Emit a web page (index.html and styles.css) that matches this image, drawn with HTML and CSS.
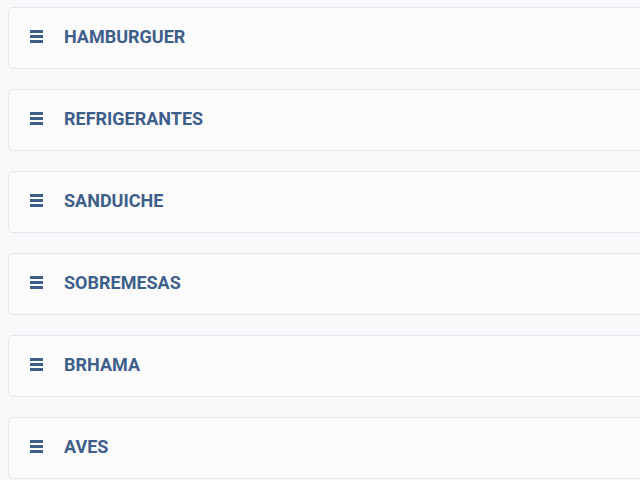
FILE: index.html
```html
<!DOCTYPE html>
<html lang="pt-BR">
<head>
  <meta charset="UTF-8" />
  <title>Categorias</title>
  <link rel="stylesheet" href="styles.css">
</head>
<body>

<!-- Lista de categorias -->
<div class="category-list">
  <div class="category-card">
    <span class="drag-icon"><i></i><i></i><i></i></span>
    <span class="category-name">HAMBURGUER</span>
  </div>
  <div class="category-card">
    <span class="drag-icon"><i></i><i></i><i></i></span>
    <span class="category-name">REFRIGERANTES</span>
  </div>
  <div class="category-card">
    <span class="drag-icon"><i></i><i></i><i></i></span>
    <span class="category-name">SANDUICHE</span>
  </div>
  <div class="category-card">
    <span class="drag-icon"><i></i><i></i><i></i></span>
    <span class="category-name">SOBREMESAS</span>
  </div>
  <div class="category-card">
    <span class="drag-icon"><i></i><i></i><i></i></span>
    <span class="category-name">BRHAMA</span>
  </div>
  <div class="category-card">
    <span class="drag-icon"><i></i><i></i><i></i></span>
    <span class="category-name">AVES</span>
  </div>
</div>

</body>
</html>
```

FILE: styles.css
```css
:root {
  --main-color: #3e5f8a;
  --page-bg: #f8f9fa;
  --card-bg: #fbfbfc;
  --border: #e4e8ee;
}

* {
  box-sizing: border-box;
}

body {
  font-family: Roboto, 'Liberation Sans', Arial, sans-serif;
  margin: 0;
  background-color: var(--page-bg);
  overflow: hidden;
}

.category-list {
  display: flex;
  flex-direction: column;
  gap: 20px;
  padding: 7px 0 0 8px;
  width: 700px;
}

.category-card {
  display: flex;
  align-items: center;
  height: 62px;
  padding: 0 0 3px 21px;
  background-color: var(--card-bg);
  border: 1px solid var(--border);
  border-radius: 5px;
}

.drag-icon {
  display: flex;
  flex-direction: column;
  gap: 2px;
  width: 13px;
  margin-right: 21px;
}

.drag-icon i {
  display: block;
  height: 3px;
  background-color: var(--main-color);
}

.category-name {
  font-size: 18px;
  font-weight: bold;
  color: var(--main-color);
}
```
